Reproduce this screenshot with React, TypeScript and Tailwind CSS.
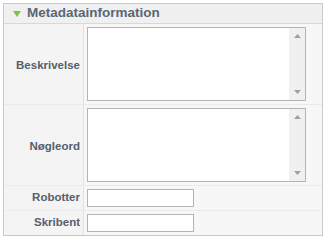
export default function App() {
  const font = { fontFamily: '"Liberation Sans", Arial, sans-serif' };

  const ScrollArea = () => (
    <div className="flex h-[74px] w-[219px] border border-[#b4b4b4] bg-white">
      <div className="flex-1" />
      <div className="flex w-[16px] flex-col items-center justify-between bg-[#f0f0f0] py-[6px]">
        <svg width="7" height="4" viewBox="0 0 7 4">
          <path d="M3.5 0 L7 4 L0 4 Z" fill="#a0a0a0" />
        </svg>
        <svg width="7" height="4" viewBox="0 0 7 4">
          <path d="M0 0 L7 0 L3.5 4 Z" fill="#a0a0a0" />
        </svg>
      </div>
    </div>
  );

  const rows = [
    { label: 'Beskrivelse', kind: 'area' },
    { label: 'Nøgleord', kind: 'area' },
    { label: 'Robotter', kind: 'input' },
    { label: 'Skribent', kind: 'input' },
  ];

  return (
    <div className="h-[239px] w-[327px] bg-white p-[3px] pr-[4px]" style={font}>
      <div className="border border-[#c8c8c8] bg-[#f4f4f4]">
        <div className="flex h-[20px] items-center gap-[6px] border-b border-[#d8d8d8] bg-[#f0f0f0] pl-[9px]">
          <svg width="8" height="6" viewBox="0 0 8 6">
            <path d="M0 0 L8 0 L4 6 Z" fill="#7cc24a" />
          </svg>
          <span className="text-[13.5px] font-bold text-[#5a6776]">Metadatainformation</span>
        </div>
        {rows.map((r) => (
          <div key={r.label} className="flex border-b border-[#ebebeb] last:border-b-0">
            <div
              className={`flex w-[80px] items-center justify-end border-r border-[#e2e2e2] pr-[3px] text-[11.5px] font-bold text-[#56606b] ${
                r.kind === 'area' ? 'h-[80px] pt-[3px]' : 'h-[24px]'
              }`}
            >
              {r.label}
            </div>
            <div className="flex flex-1 items-start bg-[#f7f7f7] pl-[3px] pt-[3px]">
              {r.kind === 'area' ? (
                <ScrollArea />
              ) : (
                <div className="h-[18px] w-[107px] border border-[#b4b4b4] bg-white" />
              )}
            </div>
          </div>
        ))}
      </div>
    </div>
  );
}
